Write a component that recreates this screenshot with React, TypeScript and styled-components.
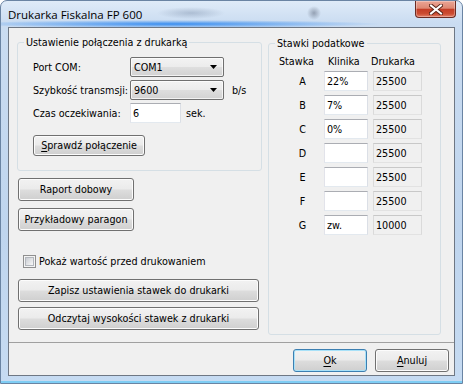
import React from "react";
import styled, { createGlobalStyle } from "styled-components";

const uiFont = `"DejaVu Sans Condensed", "Liberation Sans", sans-serif`;
const uiSize = "10.7px";

const GlobalStyle = createGlobalStyle`
  html, body {
    margin: 0;
    padding: 0;
  }
  body {
    width: 463px;
    height: 384px;
    overflow: hidden;
    background: #ffffff;
  }
`;

const rates = [
  { letter: "A", clinic: "22%", printer: "25500" },
  { letter: "B", clinic: "7%", printer: "25500" },
  { letter: "C", clinic: "0%", printer: "25500" },
  { letter: "D", clinic: "", printer: "25500" },
  { letter: "E", clinic: "", printer: "25500" },
  { letter: "F", clinic: "", printer: "25500" },
  { letter: "G", clinic: "zw.", printer: "10000" },
];

const ArrowDown = () => (
  <svg width="7" height="4" viewBox="0 0 7 4">
    <polygon points="0,0 7,0 3.5,4" fill="#000" />
  </svg>
);

const CloseGlyph = () => (
  <svg width="14" height="11" viewBox="0 0 14 11">
    <path d="M2 1.5 L12 9.5 M12 1.5 L2 9.5" stroke="#5a2418" strokeWidth="4" strokeLinecap="square" />
    <path d="M2 1.5 L12 9.5 M12 1.5 L2 9.5" stroke="#ffffff" strokeWidth="2" strokeLinecap="square" />
  </svg>
);

const App = () => {
  return (
    <>
      <GlobalStyle />
      <Window>
        <TitleBar>
          <Title>Drukarka Fiskalna FP 600</Title>
          <CloseButton>
            <CloseGlyph />
          </CloseButton>
        </TitleBar>
        <Client>
          <Main>
            <LeftColumn>
              <GroupBox $w={245}>
                <Caption>Ustawienie połączenia z drukarką</Caption>
                <ConnectionBody>
                  <FormRow>
                    <FieldLabel>Port COM:</FieldLabel>
                    <Select>
                      <span>COM1</span>
                      <ArrowDown />
                    </Select>
                  </FormRow>
                  <FormRow>
                    <FieldLabel>Szybkość transmsji:</FieldLabel>
                    <Select>
                      <span>9600</span>
                      <ArrowDown />
                    </Select>
                    <Unit $gap={8}>b/s</Unit>
                  </FormRow>
                  <FormRow>
                    <FieldLabel>Czas oczekiwania:</FieldLabel>
                    <TextBox $w={51} defaultValue="6" />
                    <Unit $gap={5}>sek.</Unit>
                  </FormRow>
                  <Button $w={112} $h={21} $mt={12}>
                    <u>S</u>prawdź połączenie
                  </Button>
                </ConnectionBody>
              </GroupBox>
              <Button $w={116} $mt={7} $ml={1}>
                Raport dobowy
              </Button>
              <Button $w={116} $mt={7} $ml={1}>
                Przykładowy paragon
              </Button>
              <CheckRow>
                <CheckBox />
                <span>Pokaż wartość przed drukowaniem</span>
              </CheckRow>
              <Button $w={241} $mt={11} $ml={1}>
                Zapisz ustawienia stawek do drukarki
              </Button>
              <Button $w={241} $mt={5} $ml={1}>
                Odczytaj wysokości stawek z drukarki
              </Button>
            </LeftColumn>
            <GroupBox $w={173} $h={292} $mt={1}>
              <Caption>Stawki podatkowe</Caption>
              <RatesBody>
                <RateHeader>
                  <HeadCell>Stawka</HeadCell>
                  <HeadCell $shift={4}>Klinika</HeadCell>
                  <HeadCell $shift={-2}>Drukarka</HeadCell>
                </RateHeader>
                <RateGrid>
                  {rates.map((r) => (
                    <React.Fragment key={r.letter}>
                      <RateLetter>{r.letter}</RateLetter>
                      <TextBox $w={44} defaultValue={r.clinic} />
                      <TextBox $w={49} $readOnly readOnly defaultValue={r.printer} />
                    </React.Fragment>
                  ))}
                </RateGrid>
              </RatesBody>
            </GroupBox>
          </Main>
          <Footer>
            <Button $w={74} $default>
              <u>O</u>k
            </Button>
            <Button $w={74}>
              <u>A</u>nuluj
            </Button>
          </Footer>
        </Client>
      </Window>
    </>
  );
};

export default App;

const Window = styled.div`
  width: 463px;
  height: 384px;
  box-sizing: border-box;
  display: flex;
  flex-direction: column;
  border: 1px solid #6a84a3;
  border-radius: 7px 7px 0 0;
  overflow: hidden;
  background:
    radial-gradient(ellipse 210px 4px at 170px 23px, rgba(50, 138, 240, 0.95), rgba(50, 138, 240, 0)),
    radial-gradient(ellipse 34px 6px at 190px 12px, rgba(100, 120, 150, 0.35), rgba(100, 120, 150, 0)),
    radial-gradient(ellipse 7px 7px at 313px 12px, rgba(70, 80, 100, 0.45), rgba(70, 80, 100, 0)),
    linear-gradient(to bottom, #dfebf8 0, #cadcf1 22px, #bfd5ee 60%, #c6dbf2 100%);
  box-shadow: inset 0 -4px 0 -2px #7fcdf4;
  font-family: ${uiFont};
  font-size: ${uiSize};
  color: #000;
`;

const TitleBar = styled.div`
  height: 26px;
  flex-shrink: 0;
  display: flex;
  justify-content: space-between;
  align-items: flex-start;
`;

const Title = styled.div`
  padding: 6px 0 0 7px;
  font-family: "Open Sans", sans-serif;
  font-size: 11.5px;
  line-height: 15px;
  color: #000;
`;

const CloseButton = styled.div`
  width: 41px;
  height: 17px;
  margin-right: 6px;
  box-sizing: border-box;
  border: 1px solid #6b2b22;
  border-top: none;
  border-radius: 0 0 4px 4px;
  background: linear-gradient(#eba595 0%, #dd8873 45%, #c43d26 52%, #cc4d32 80%, #e4826a 100%);
  box-shadow: inset 0 0 0 1px rgba(255, 255, 255, 0.3);
  display: flex;
  align-items: center;
  justify-content: center;
`;

const Client = styled.div`
  flex: 1;
  margin: 0 7px 7px;
  border: 1px solid #6e7784;
  background: #f0f0f0;
  display: flex;
  flex-direction: column;
`;

const Main = styled.div`
  height: 314px;
  flex-shrink: 0;
  box-sizing: border-box;
  padding: 14px 0 0 8px;
  display: flex;
  align-items: flex-start;
  gap: 6px;
`;

const LeftColumn = styled.div`
  display: flex;
  flex-direction: column;
  align-items: flex-start;
`;

const GroupBox = styled.div<{ $w: number; $h?: number; $mt?: number }>`
  position: relative;
  width: ${(p) => p.$w}px;
  height: ${(p) => (p.$h ? `${p.$h}px` : "auto")};
  margin-top: ${(p) => p.$mt || 0}px;
  box-sizing: border-box;
  border: 1px solid #d5dfe5;
  border-radius: 3px;
`;

const Caption = styled.span`
  position: absolute;
  top: -7px;
  left: 6px;
  padding: 0 2px;
  line-height: 13px;
  white-space: nowrap;
  background: #f0f0f0;
`;

const ConnectionBody = styled.div`
  padding: 14px 0 14px 15px;
  display: flex;
  flex-direction: column;
  align-items: flex-start;
`;

const FormRow = styled.div`
  display: flex;
  align-items: center;
  height: 20px;
  & + & {
    margin-top: 3px;
  }
`;

const FieldLabel = styled.span`
  width: 97px;
  flex-shrink: 0;
  white-space: nowrap;
`;

const Unit = styled.span<{ $gap: number }>`
  margin-left: ${(p) => p.$gap}px;
  white-space: nowrap;
`;

const Select = styled.div`
  width: 94px;
  height: 20px;
  flex-shrink: 0;
  box-sizing: border-box;
  padding: 0 6px 0 3px;
  border: 1px solid #707070;
  border-radius: 2px;
  background: linear-gradient(#f3f3f3 0%, #ececec 48%, #dedede 52%, #d2d2d2 100%);
  box-shadow: inset 0 0 0 1px rgba(255, 255, 255, 0.7);
  display: flex;
  align-items: center;
  justify-content: space-between;
`;

const TextBox = styled.input<{ $w: number; $readOnly?: boolean }>`
  width: ${(p) => p.$w}px;
  height: 20px;
  flex-shrink: 0;
  box-sizing: border-box;
  margin: 0;
  padding: 0 2px;
  border: 1px solid;
  border-color: ${(p) =>
    p.$readOnly ? "#c8c8c8 #dadada #e2e2e2 #dadada" : "#abadb3 #dbdfe6 #e3e9ef #e2e3ea"};
  border-radius: 0;
  background: ${(p) => (p.$readOnly ? "#f0f0f0" : "#ffffff")};
  font-family: ${uiFont};
  font-size: ${uiSize};
  color: #000;
  outline: none;
`;

const Button = styled.button<{ $w: number; $h?: number; $mt?: number; $ml?: number; $default?: boolean }>`
  width: ${(p) => p.$w}px;
  height: ${(p) => p.$h || 23}px;
  margin: ${(p) => p.$mt || 0}px 0 0 ${(p) => p.$ml || 0}px;
  box-sizing: border-box;
  padding: 0;
  border: 1px solid ${(p) => (p.$default ? "#3c7fb1" : "#707070")};
  border-radius: 3px;
  background: linear-gradient(#f2f2f2 0%, #ebebeb 48%, #dddddd 52%, #cfcfcf 100%);
  box-shadow: inset 0 0 0 1px ${(p) => (p.$default ? "#a8e1f8" : "#fcfcfc")};
  font-family: ${uiFont};
  font-size: ${uiSize};
  color: #000;
  white-space: nowrap;
  u {
    text-decoration-thickness: 1px;
    text-underline-offset: 2px;
  }
`;

const CheckRow = styled.div`
  margin: 24px 0 0 6px;
  height: 13px;
  display: flex;
  align-items: center;
  gap: 3px;
  line-height: 13px;
`;

const CheckBox = styled.span`
  width: 13px;
  height: 13px;
  box-sizing: border-box;
  border: 1px solid #8f8f8f;
  background: #f4f4f4;
  display: flex;
  align-items: center;
  justify-content: center;
  &::after {
    content: "";
    width: 9px;
    height: 9px;
    box-sizing: border-box;
    border: 1px solid #b3b7bd;
    background: linear-gradient(135deg, #c9cdd3 0%, #e6e7e9 60%, #f8f8f8 100%);
  }
`;

const RatesBody = styled.div`
  padding: 11px 0 0 10px;
`;

const RateHeader = styled.div`
  display: grid;
  grid-template-columns: 45px 49px 49px;
  height: 14px;
  margin-bottom: 2px;
  line-height: 14px;
`;

const HeadCell = styled.span<{ $shift?: number }>`
  margin-left: ${(p) => p.$shift || 0}px;
  white-space: nowrap;
`;

const RateGrid = styled.div`
  display: grid;
  grid-template-columns: 45px 49px 49px;
  grid-auto-rows: 20px;
  row-gap: 4px;
  align-items: center;
`;

const RateLetter = styled.span`
  text-align: center;
  padding-left: 2px;
`;

const Footer = styled.div`
  flex: 1;
  border-top: 1px solid #a0a0a0;
  display: flex;
  justify-content: flex-end;
  align-items: flex-start;
  gap: 8px;
  padding: 6px 5px 0 0;
`;
